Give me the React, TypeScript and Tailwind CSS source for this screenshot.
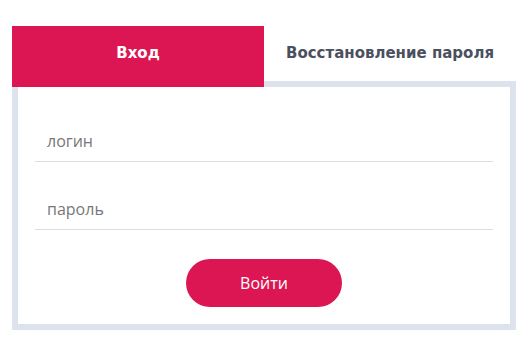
import React from "react";

export default function App() {
  return (
    <div className="w-[529px] h-[349px] bg-white pt-[26px] pl-[12px]">
      <div className="w-[504px] flex items-start">
        <div className="relative z-10 w-[252px] h-[61px] -mb-[6px] bg-[#dc1652] flex items-center justify-center pb-[6px]">
          <span className="text-white font-bold text-[15px] [font-family:'DejaVu_Sans',sans-serif]">Вход</span>
        </div>
        <div className="w-[252px] h-[55px] flex items-center justify-center">
          <span className="text-[#4b505e] font-bold text-[15px] [font-family:'DejaVu_Sans',sans-serif]">Восстановление пароля</span>
        </div>
      </div>
      <div className="w-[504px] h-[249px] border-[6px] border-[#dde3ec] bg-white px-[17px] pt-[27px] flex flex-col">
        <div className="h-[48px] pt-[6px] border-b border-[#dedede] flex items-center pl-[12px]">
          <span className="text-[#777] text-[16px] [font-family:'Open_Sans',sans-serif]">логин</span>
        </div>
        <div className="h-[48px] mt-[20px] pt-[6px] border-b border-[#dedede] flex items-center pl-[12px]">
          <span className="text-[#777] text-[16px] [font-family:'Open_Sans',sans-serif]">пароль</span>
        </div>
        <div className="mt-[29px] flex justify-center">
          <button className="w-[156px] h-[48px] rounded-full bg-[#dc1652] text-white text-[16px] [font-family:'Open_Sans',sans-serif]">Войти</button>
        </div>
      </div>
    </div>
  );
}
